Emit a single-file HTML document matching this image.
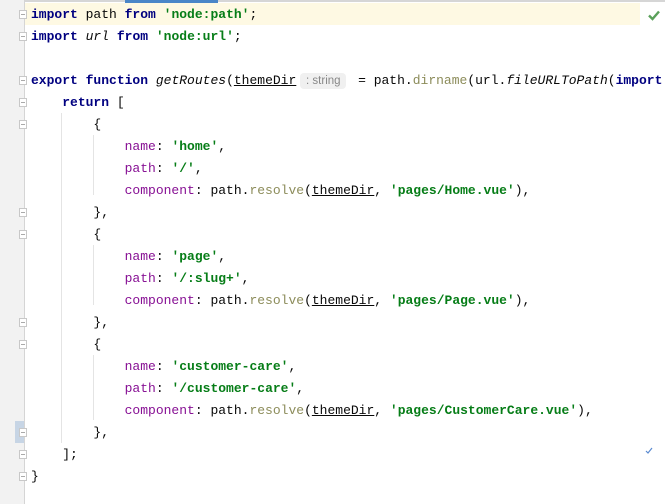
<!DOCTYPE html>
<html><head><meta charset="utf-8"><style>
body{margin:0;width:665px;height:504px;background:#fff;overflow:hidden;position:relative;font-family:"Liberation Mono",monospace;font-size:13px;}
.gut{position:absolute;left:0;top:0;width:24px;height:504px;background:#f2f2f2;border-right:1px solid #d5d5d5;}
.l{position:absolute;left:31px;height:22px;line-height:22px;white-space:pre;color:#080808;}
.k{font-weight:bold;color:#000080}
.s{color:#067d17;font-weight:bold}
.p{color:#871094}
.m{color:#8c8c5a}
.i{font-style:italic}
.u{text-decoration:underline}
.hint{display:inline-block;width:46px;text-align:center;line-height:16px;font-family:"Liberation Sans",sans-serif;font-size:11.5px;color:#888;background:#f0f0f0;border-radius:4px;margin:0 4px 0 4px}
.g{position:absolute;width:1px;background:#e4e4e4}
.f{position:absolute;left:19px;width:8px;height:9px;border:1px solid #c8c8c8;box-sizing:border-box;background:#fff}
.f:after{content:"";position:absolute;left:1px;top:3px;width:4px;height:1px;background:#aaa}
</style></head><body>
<div style="position:absolute;left:0;top:0;width:665px;height:2px;background:#d6d6d6"></div>
<div style="position:absolute;left:125px;top:0;width:93px;height:3px;background:#4a86c8"></div>
<div style="position:absolute;left:25px;top:3px;width:615px;height:22px;background:#fef9e3"></div>
<div class="gut"></div>
<div style="position:absolute;left:15px;top:421px;width:9px;height:22px;background:#c7d5e5"></div>
<div class="g" style="left:61px;top:113px;height:330px"></div>
<div class="g" style="left:93px;top:135px;height:60px"></div>
<div class="g" style="left:93px;top:245px;height:60px"></div>
<div class="g" style="left:93px;top:355px;height:65px"></div>
<div class="f" style="top:10px"></div><div class="f" style="top:32px"></div>
<div class="f" style="top:76px"></div><div class="f" style="top:98px"></div>
<div class="f" style="top:120px"></div><div class="f" style="top:208px"></div>
<div class="f" style="top:230px"></div><div class="f" style="top:318px"></div>
<div class="f" style="top:340px"></div><div class="f" style="top:428px"></div>
<div class="f" style="top:450px"></div><div class="f" style="top:472px"></div>
<div class="l" style="top:4px"><span class="k">import</span> path <span class="k">from</span> <span class="s">'node:path'</span>;</div>
<div class="l" style="top:26px"><span class="k">import</span> <span class="i">url</span> <span class="k">from</span> <span class="s">'node:url'</span>;</div>
<div class="l" style="top:70px"><span class="k">export function</span> <span class="i">getRoutes</span>(<span class="u">themeDir</span><span class="hint">: string</span> = path.<span class="m">dirname</span>(url.<span class="i">fileURLToPath</span>(<span class="k">import</span></div>
<div class="l" style="top:92px">    <span class="k">return</span> [</div>
<div class="l" style="top:114px">        {</div>
<div class="l" style="top:136px">            <span class="p">name</span>: <span class="s">'home'</span>,</div>
<div class="l" style="top:158px">            <span class="p">path</span>: <span class="s">'/'</span>,</div>
<div class="l" style="top:180px">            <span class="p">component</span>: path.<span class="m">resolve</span>(<span class="u">themeDir</span>, <span class="s">'pages/Home.vue'</span>),</div>
<div class="l" style="top:202px">        },</div>
<div class="l" style="top:224px">        {</div>
<div class="l" style="top:246px">            <span class="p">name</span>: <span class="s">'page'</span>,</div>
<div class="l" style="top:268px">            <span class="p">path</span>: <span class="s">'/:slug+'</span>,</div>
<div class="l" style="top:290px">            <span class="p">component</span>: path.<span class="m">resolve</span>(<span class="u">themeDir</span>, <span class="s">'pages/Page.vue'</span>),</div>
<div class="l" style="top:312px">        },</div>
<div class="l" style="top:334px">        {</div>
<div class="l" style="top:356px">            <span class="p">name</span>: <span class="s">'customer-care'</span>,</div>
<div class="l" style="top:378px">            <span class="p">path</span>: <span class="s">'/customer-care'</span>,</div>
<div class="l" style="top:400px">            <span class="p">component</span>: path.<span class="m">resolve</span>(<span class="u">themeDir</span>, <span class="s">'pages/CustomerCare.vue'</span>),</div>
<div class="l" style="top:422px">        },</div>
<div class="l" style="top:444px">    ];</div>
<div class="l" style="top:466px">}</div>
<div style="position:absolute;left:640px;top:3px;width:25px;height:22px;background:#fff"></div>
<svg style="position:absolute;left:647px;top:8px" width="14" height="14" viewBox="0 0 14 14"><path d="M2 7.5L5.5 11L12 3.5" stroke="#5aa05a" stroke-width="2.4" fill="none"/></svg>
<svg style="position:absolute;left:645px;top:447px" width="8" height="8" viewBox="0 0 8 8"><path d="M1 4L3 6L7 1" stroke="#5a8ad0" stroke-width="1.2" fill="none"/></svg>
</body></html>
